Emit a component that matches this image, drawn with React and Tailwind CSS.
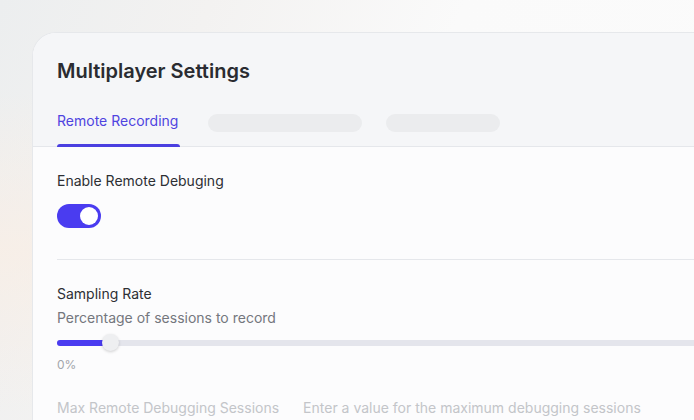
export default function App() {
  return (
    <div className="relative h-[420px] w-[694px] overflow-hidden bg-[linear-gradient(110deg,#eceeef_0%,#f3f2f1_25%,#fafafa_55%,#fbfbfb_100%)] font-['Inter',sans-serif]">
      <div className="pointer-events-none absolute inset-0 bg-[radial-gradient(ellipse_at_0%_60%,rgba(250,238,228,0.7),rgba(250,238,228,0)_45%)]" />
      <div className="relative ml-[32px] mt-[32px] w-[700px] overflow-hidden rounded-tl-[24px] border-l border-t border-[#e6e8eb] bg-[#fcfcfd]">
        <div className="border-b border-[#e5e7eb] bg-[#f5f6f8] px-6 pt-6">
          <h1 className="text-[20px] font-semibold leading-7 text-[#2a2c31]">Multiplayer Settings</h1>
          <div className="mt-[26px] flex items-start">
            <div className="flex flex-col">
              <span className="text-[14px] leading-5 text-[#4f44e0]">Remote Recording</span>
              <span className="mt-[13px] h-[3px] w-[123px] -mb-px rounded-t-[3px] bg-[#4a3fe0]" />
            </div>
            <div className="ml-[28px] mt-[3px] h-[18px] w-[154px] rounded-full bg-[#ebecee]" />
            <div className="ml-[24px] mt-[3px] h-[18px] w-[114px] rounded-full bg-[#ebecee]" />
          </div>
        </div>
        <div className="px-6 pt-6 pb-6">
          <div className="text-[14px] leading-5 text-[#2d2f34]">Enable Remote Debuging</div>
          <div className="mt-[13px] flex h-[24px] w-[44px] items-center justify-end rounded-full bg-[#4a3cf0] px-[3px]">
            <div className="h-[18px] w-[18px] rounded-full bg-white" />
          </div>
          <div className="mt-[31px] h-px bg-[#e5e7eb]" />
          <div className="mt-[24px] text-[14px] leading-5 text-[#2d2f34]">Sampling Rate</div>
          <div className="mt-1 text-[14px] leading-5 text-[#74777d]">Percentage of sessions to record</div>
          <div className="relative mt-[6px] flex h-[18px] items-center">
            <div className="h-[6px] w-full rounded-full bg-[#e4e5ec]">
              <div className="h-[6px] w-[50px] rounded-full bg-[#4a3cf0]" />
            </div>
            <div className="absolute left-[45px] top-0 h-[17px] w-[17px] rounded-full bg-[#eeeff1] shadow-[0_1px_3px_rgba(0,0,0,0.18)]" />
          </div>
          <div className="mt-[5px] text-[12px] leading-4 text-[#a3a6ab]">0%</div>
          <div className="mt-[25px] flex gap-6 text-[14px] leading-5 text-[#c3c5c9]">
            <span>Max Remote Debugging Sessions</span>
            <span>Enter a value for the maximum debugging sessions</span>
          </div>
        </div>
      </div>
    </div>
  );
}
